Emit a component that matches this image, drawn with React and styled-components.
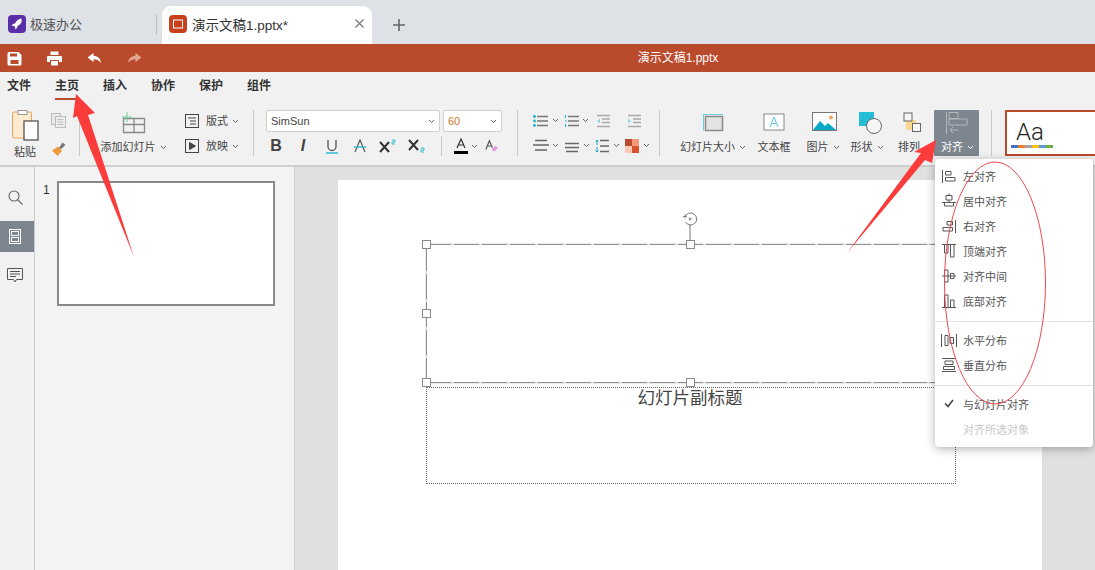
import React from "react";
import styled, { createGlobalStyle } from "styled-components";

const GlobalStyle = createGlobalStyle`
	html, body {
		margin: 0;
		padding: 0;
		background: #e0e0e0;
		overflow: hidden;
	}
	* {
		box-sizing: border-box;
	}
	body {
		font-family: "Liberation Sans", "Noto Sans CJK SC", sans-serif;
		color: #444;
	}
`;

const Page = styled.div`
	position: relative;
	width: 1095px;
	height: 570px;
	overflow: hidden;
	display: flex;
	flex-direction: column;
`;

/* browser tabs */
const TabBar = styled.div`
	height: 44px;
	flex: none;
	background: #dee1e6;
	display: flex;
	align-items: flex-end;
`;
const HomeTab = styled.div`
	width: 156px;
	height: 38px;
	padding: 0 0 3px 8px;
	display: flex;
	align-items: center;
	gap: 4px;
	font-size: 13px;
	color: #555;
`;
const TabDivider = styled.div`
	width: 1px;
	height: 20px;
	margin-bottom: 9px;
	background: #b9bcc1;
`;
const ActiveTab = styled.div`
	width: 210px;
	height: 38px;
	margin-left: 5px;
	padding: 0 8px 3px 7px;
	display: flex;
	align-items: center;
	gap: 5px;
	font-size: 13.5px;
	color: #333;
	background: #fff;
	border-radius: 9px 9px 0 0;
`;
const TabTitle = styled.span`
	flex: 1;
`;
const AddTab = styled.div`
	margin: 0 0 8px 21px;
	height: 22px;
	display: flex;
	align-items: center;
`;

const TitleBar = styled.div`
	position: relative;
	height: 28px;
	flex: none;
	background: #b94a2b;
	display: flex;
	align-items: center;
	padding-left: 7px;
`;
const QuickSlot = styled.div`
	width: 40px;
	display: flex;
	align-items: center;
`;
const DocTitle = styled.div`
	position: absolute;
	left: 0;
	right: 0;
	top: 6px;
	text-align: center;
	padding-left: 261px;
	font-size: 12px;
	line-height: 16px;
	color: #fff;
`;

const MenuBar = styled.div`
	height: 28px;
	flex: none;
	background: #f1f1f1;
	display: flex;
	padding-left: 7px;
	gap: 24px;
`;
const MenuItem = styled.div`
	height: 28px;
	line-height: 29px;
	font-size: 12px;
	font-weight: 700;
	color: #333;
	border-bottom: ${p => (p.$active ? "2px solid #b94a2b" : "0")};
`;

const Ribbon = styled.div`
	height: 67px;
	flex: none;
	background: #f1f1f1;
	border-bottom: 2px solid #cfcfcf;
	display: flex;
	align-items: flex-start;
	padding-top: 10px;
`;
const Sep = styled.div`
	flex: none;
	width: 1px;
	height: 46px;
	margin-left: ${p => p.$ml || 0}px;
	background: #c9c9c9;
`;
const PasteGroup = styled.div`
	width: 79px;
	flex: none;
	display: flex;
	padding-left: 11px;
	gap: 12px;
`;
const PasteCol = styled.div`
	width: 28px;
	display: flex;
	flex-direction: column;
	align-items: center;
	gap: 3px;
`;
const SmallCol = styled.div`
	display: flex;
	flex-direction: column;
	gap: 13px;
	padding-top: 3px;
`;
const Label = styled.span`
	font-size: 11px;
	line-height: 16px;
	color: ${p => (p.$light ? "#fff" : "#444")};
	white-space: nowrap;
	display: inline-flex;
	align-items: center;
	gap: 4px;
	margin-left: ${p => p.$indent || 0}px;
`;
const BigButton = styled.div`
	flex: none;
	width: ${p => p.$w}px;
	height: 46px;
	margin-left: ${p => p.$ml || 0}px;
	display: flex;
	flex-direction: column;
	align-items: center;
	justify-content: space-between;
	padding: 2px 0 1px;
	background: ${p => (p.$active ? "#7d868e" : "transparent")};
	border-radius: 1px;
`;
const StackGroup = styled.div`
	flex: none;
	width: ${p => p.$w}px;
	margin-left: ${p => p.$ml || 0}px;
	display: flex;
	flex-direction: column;
	gap: ${p => p.$gap ?? 3}px;
`;
const Row = styled.div`
	display: flex;
	align-items: center;
	height: ${p => p.$h || 22}px;
	gap: ${p => p.$gap || 0}px;
`;
const SelectBox = styled.div`
	width: ${p => p.$w}px;
	height: 22px;
	background: #fff;
	border: 1px solid #cfcfcf;
	border-radius: 2px;
	padding: 0 4px;
	display: flex;
	align-items: center;
	justify-content: space-between;
	font-size: 11px;
	color: ${p => p.$color || "#444"};
`;
const ToolSlot = styled.div`
	width: ${p => p.$w}px;
	flex: none;
	display: flex;
	align-items: center;
	gap: ${p => p.$gap || 0}px;
	padding-left: ${p => p.$pl || 0}px;
	justify-content: ${p => (p.$left ? "flex-start" : "center")};
`;
const BoldGlyph = styled.b`
	font-size: 16px;
	color: #444;
`;
const ItalicGlyph = styled.i`
	font-size: 16px;
	font-weight: 700;
	color: #444;
`;
const InnerSep = styled.div`
	flex: none;
	width: 1px;
	height: 20px;
	margin-left: 7px;
	background: #c9c9c9;
`;
const ThemeCard = styled.div`
	flex: none;
	width: 90px;
	height: 46px;
	margin-left: 13px;
	background: #fff;
	border: 2px solid #b94a2b;
	border-right: 0;
	padding: 7px 0 0 4px;
`;
const ThemeText = styled.div`
	font-family: Roboto, "Liberation Sans", sans-serif;
	font-weight: 300;
	font-size: 24px;
	line-height: 26px;
	margin-left: 5px;
	color: #222;
`;
const Swatches = styled.div`
	display: flex;
`;
const Swatch = styled.i`
	width: 7px;
	height: 3px;
	background: ${p => p.$c};
`;

/* main area */
const Body = styled.div`
	flex: 1;
	display: grid;
	grid-template-columns: 35px 260px 1fr;
	min-height: 0;
`;
const Rail = styled.div`
	background: #f1f1f1;
	border-right: 1px solid #c9c9c9;
	padding-top: 15px;
	display: flex;
	flex-direction: column;
	gap: 8px;
`;
const RailButton = styled.div`
	height: 31px;
	padding-right: 4px;
	display: flex;
	align-items: center;
	justify-content: center;
	background: ${p => (p.$active ? "#7d868e" : "transparent")};
`;
const Thumbs = styled.div`
	background: #f3f3f3;
	border-right: 1px solid #cfcfcf;
	padding: 14px 0 0 8px;
	display: flex;
	gap: 7px;
	align-items: flex-start;
`;
const ThumbNumber = styled.div`
	width: 7px;
	font-size: 12px;
	line-height: 18px;
	color: #333;
`;
const Thumb = styled.div`
	width: 218px;
	height: 125px;
	background: #fff;
	border: 2px solid #888;
`;
const Canvas = styled.div`
	background: #e0e0e0;
	padding: 13px 53px 0 43px;
	overflow: hidden;
`;
const Slide = styled.div`
	position: relative;
	width: 704px;
	height: 420px;
	background: #fff;
`;
const hDash = "repeating-linear-gradient(90deg, #8f8f8f 0 25px, #dcdcdc 25px 28px)";
const vDash = "repeating-linear-gradient(0deg, #8f8f8f 0 25px, #dcdcdc 25px 28px)";
const TitleBox = styled.div`
	position: absolute;
	left: 88px;
	top: 64px;
	width: 530px;
	height: 139px;
	background:
		${hDash} top / 100% 1px no-repeat,
		${hDash} bottom / 100% 1px no-repeat,
		${vDash} left / 1px 100% no-repeat,
		${vDash} right / 1px 100% no-repeat;
	outline: 1px solid #ececec;
`;
const SubtitleBox = styled.div`
	position: absolute;
	left: 88px;
	top: 207px;
	width: 530px;
	height: 97px;
	padding-right: 2px;
	border: 1px dotted #666;
	text-align: center;
	font-size: 17.5px;
	line-height: 20px;
	color: #444;
`;
const Handle = styled.div`
	position: absolute;
	left: ${p => p.$x}px;
	top: ${p => p.$y}px;
	width: 9px;
	height: 9px;
	background: #fff;
	border: 1px solid #8a8a8a;
`;
const RotateIcon = styled.svg`
	position: absolute;
	left: 344px;
	top: 32px;
`;

/* align dropdown */
const Dropdown = styled.div`
	position: absolute;
	left: 935px;
	top: 159px;
	width: 158px;
	height: 288px;
	padding-top: 4px;
	background: #fff;
	border-radius: 4px;
	box-shadow: 0 2px 10px rgba(0, 0, 0, 0.3);
`;
const DropItem = styled.div`
	height: 25px;
	display: flex;
	align-items: center;
	gap: 6px;
	padding-left: 6px;
	font-size: 11px;
	color: ${p => (p.$disabled ? "#c9c9c9" : "#555")};
`;
const DropIcon = styled.div`
	width: 16px;
	height: 18px;
	flex: none;
	display: flex;
	align-items: center;
	justify-content: center;
`;
const DropLine = styled.div`
	height: 1px;
	margin: 8px 0 5px;
	background: #e3e3e3;
`;
const Marks = styled.svg`
	position: absolute;
	left: 0;
	top: 0;
	pointer-events: none;
`;

const Caret = ({ color = "#666" }) => (
	<svg width="7" height="5" viewBox="0 0 7 5" fill="none" stroke={color} strokeWidth="1">
		<path d="M1 1l2.5 2.5L6 1" />
	</svg>
);

const Ico = ({ w = 16, h = 16, children, stroke = "#555", ...rest }) => (
	<svg width={w} height={h} viewBox={`0 0 ${w} ${h}`} fill="none" stroke={stroke} strokeWidth="1" {...rest}>
		{children}
	</svg>
);

const ListIcon = ({ num }) => (
	<Ico w={16} h={14}>
		<path d="M4 2.5h11M4 7h11M4 11.5h11" stroke="#777" strokeWidth="1.6" />
		{num ? (
			<path d="M1.5 1v3M1 7h2M1.5 10v3" stroke="#2bb5d0" strokeWidth="1.2" />
		) : (
			<g fill="#19b3d6" stroke="none">
				<circle cx="1.5" cy="2.5" r="1.4" />
				<circle cx="1.5" cy="7" r="1.4" />
				<circle cx="1.5" cy="11.5" r="1.4" />
			</g>
		)}
	</Ico>
);

const IndentIcon = ({ right }) => (
	<Ico w={15} h={14}>
		<path d="M1 1.5h13M6 5h8M6 8.5h8M1 12.5h13" stroke="#aaa" strokeWidth="1.3" />
		<path d={right ? "M1 4.5l3 2.5-3 2.5z" : "M4 4.5L1 7l3 2.5z"} fill="#8fd3e6" stroke="none" />
	</Ico>
);

const LinesIcon = ({ middle }) => (
	<Ico w={16} h={14}>
		{middle ? (
			<path d="M1 4.5h14M1 8.5h14M2 12.5h12" stroke="#666" strokeWidth="1.3" />
		) : (
			<path d="M2 1.5h12M0 6h16M2 11h12" stroke="#666" strokeWidth="1.3" />
		)}
	</Ico>
);

const alignIcons = {
	left: <path d="M1.500 3v13M4.500 4.500h5.500v3.500H4.500zM4.500 10.500h9.500V14H4.500z" />,
	center: <path d="M8 1.500v2M5 3.500h6V8H5zM8 8v2M1 10.500h14M3.500 10.500V14h9v-3.500" />,
	right: <path d="M14.500 3v13M11.500 4.500H6V8h5.500zM11.500 10.500H2V14h9.500z" />,
	top: <path d="M1 2.500h14M3.500 2.500V11H7V2.500M9.500 2.500V15H13V2.500" />,
	middle: <path d="M1 9h14M3.500 3H7v12H3.500zM9.500 6.500H13v5H9.500z" />,
	bottom: <path d="M1 15.500h14M3.500 15.500V3H7v12.500M9.500 15.500V8H13v7.500" />,
	hdist: <path d="M.5 3v13M15.500 3v13M4 4.500h3v10H4zM9 6.500h3.500v6H9z" />,
	vdist: <path d="M1 2.500h14M1 15.500h14M4 5h8v3.500H4zM2.500 10.500h11v3h-11z" />
};

const AlignIcon = ({ name }) => (
	<Ico w={16} h={18} stroke="#555">
		{alignIcons[name]}
	</Ico>
);

const dropTop = [
	["left", "左对齐"],
	["center", "居中对齐"],
	["right", "右对齐"],
	["top", "顶端对齐"],
	["middle", "对齐中间"],
	["bottom", "底部对齐"]
];
const swatchColors = ["#4472c4", "#ed7d31", "#a5a5a5", "#ffc000", "#5b9bd5", "#70ad47"];
const menus = ["文件", "主页", "插入", "协作", "保护", "组件"];
const handles = [
	[84, 60],
	[348, 60],
	[84, 129],
	[84, 198],
	[348, 198]
];

export default function App() {
	return (
		<Page>
			<GlobalStyle />
			<TabBar>
				<HomeTab>
					<Ico w={18} h={18} stroke="none">
						<rect width="18" height="18" rx="4" fill="#5b2fa8" />
						<path d="M13.500 3.500c-3 .3-5 2-6.500 5L5 9l-1.500 2 2.200-.3 1.600 1.600L7 14.500 9 13l.5-2c3-1.500 4.700-3.500 4-7.500z" fill="#fff" />
					</Ico>
					极速办公
				</HomeTab>
				<TabDivider />
				<ActiveTab>
					<Ico w={18} h={18} stroke="none">
						<rect width="18" height="18" rx="4" fill="#c8401c" />
						<rect x="4.500" y="5" width="9" height="8" fill="none" stroke="#fff" />
					</Ico>
					<TabTitle>演示文稿1.pptx*</TabTitle>
					<Ico w={9} h={9} stroke="#777" strokeWidth="1.200">
						<path d="M.5.5l8 8M8.500.5l-8 8" />
					</Ico>
				</ActiveTab>
				<AddTab>
					<Ico w={12} h={12} stroke="#666" strokeWidth="1.600">
						<path d="M6 0v12M0 6h12" />
					</Ico>
				</AddTab>
			</TabBar>

			<TitleBar>
				<QuickSlot>
					<Ico w={15} h={15} stroke="none">
						<path d="M2 1h9.500L14.500 4v9a1.500 1.500 0 0 1-1.500 1.500H2A1.500 1.500 0 0 1 .5 13V2.500A1.500 1.500 0 0 1 2 1z" fill="#fff" />
						<path d="M3 2.500h7v3H3zM3.500 9h8v4h-8z" fill="#b94a2b" />
					</Ico>
				</QuickSlot>
				<QuickSlot>
					<Ico w={15} h={15} stroke="none">
						<path d="M3.500.5h8V4h-8zM1 5h13a1 1 0 0 1 1 1v5h-3V9H3v2H0V6a1 1 0 0 1 1-1z" fill="#fff" />
						<path d="M4 10h7v4.500H4z" fill="#fff" />
					</Ico>
				</QuickSlot>
				<QuickSlot>
					<Ico w={15} h={12} stroke="none">
						<path d="M6.500 1L.5 5.500l6 4.500V7.200c3 0 5.500.8 7.500 3.800-.5-4.500-3-7-7.500-7.300z" fill="#fff" />
					</Ico>
				</QuickSlot>
				<QuickSlot>
					<Ico w={15} h={12} stroke="none">
						<path d="M8.500 1l6 4.500-6 4.500V7.200c-3 0-5.500.8-7.500 3.800.5-4.500 3-7 7.500-7.300z" fill="#e2a793" />
					</Ico>
				</QuickSlot>
				<DocTitle>演示文稿1.pptx</DocTitle>
			</TitleBar>

			<MenuBar>
				{menus.map(m => (
					<MenuItem key={m} $active={m === "主页"}>
						{m}
					</MenuItem>
				))}
			</MenuBar>

			<Ribbon>
				<PasteGroup>
					<PasteCol>
						<Ico w={27} h={31} stroke="none">
							<rect x=".5" y="2" width="19" height="26" rx="1.500" fill="#fdebd0" stroke="#e8a45c" />
							<rect x="6" y=".5" width="9" height="4" fill="#fff" stroke="#999" />
							<rect x="12" y="11" width="14" height="19" fill="#fff" stroke="#555" strokeWidth="1.300" />
						</Ico>
						<Label>粘贴</Label>
					</PasteCol>
					<SmallCol>
						<Ico w={15} h={15} stroke="#bdbdbd">
							<rect x=".5" y=".5" width="9" height="11" fill="#e8e8e8" />
							<rect x="4.500" y="3.500" width="10" height="11" fill="#eee" />
							<path d="M6.500 6.500h6M6.500 9h6M6.500 11.500h6" />
						</Ico>
						<Ico w={15} h={15} stroke="none">
							<path d="M8 7l3.500-5.500L14.500 4 9.500 8.500z" fill="#777" />
							<path d="M1 9.500L7 5.500l4 4.500-4.500 5z" fill="#ee9a3c" />
						</Ico>
					</SmallCol>
				</PasteGroup>
				<Sep />
				<BigButton $w={67} $ml={20}>
					<Ico w={24} h={22} stroke="#8a8a8a">
						<path d="M1.500 6.500h21v14h-21zM12 6.500v14M1.500 12.500h21" strokeWidth="1.300" />
						<path d="M5 0v10M0 5h10" stroke="#6fcf97" />
					</Ico>
					<Label>
						添加幻灯片
						<Caret />
					</Label>
				</BigButton>
				<StackGroup $w={68} $ml={18} $gap={3}>
					<Row $gap={7}>
						<Ico w={14} h={14} stroke="#444">
							<rect x=".5" y=".5" width="13" height="13" />
							<path d="M3 4h8M5 7h6M5 10h6" />
						</Ico>
						<Label>
							版式
							<Caret />
						</Label>
					</Row>
					<Row $gap={7}>
						<Ico w={14} h={14} stroke="#444">
							<rect x=".5" y=".5" width="13" height="13" />
							<path d="M4.500 3.500l6 3.500-6 3.500z" fill="#444" />
						</Ico>
						<Label>
							放映
							<Caret />
						</Label>
					</Row>
				</StackGroup>
				<Sep />
				<StackGroup $w={236} $ml={12} $gap={3}>
					<Row $gap={3}>
						<SelectBox $w={174}>
							SimSun
							<Caret />
						</SelectBox>
						<SelectBox $w={59} $color="#c97b2f">
							60
							<Caret />
						</SelectBox>
					</Row>
					<Row>
						<ToolSlot $w={20}>
							<BoldGlyph>B</BoldGlyph>
						</ToolSlot>
						<ToolSlot $w={34}>
							<ItalicGlyph>I</ItalicGlyph>
						</ToolSlot>
						<ToolSlot $w={24}>
							<Ico w={12} h={15} stroke="#555" strokeWidth="1.300">
								<path d="M2 1v6.500a4 4 0 0 0 8 0V1" />
								<path d="M0 14h12" stroke="#1fb4d2" strokeWidth="1.400" />
							</Ico>
						</ToolSlot>
						<ToolSlot $w={32}>
							<Ico w={12} h={14} stroke="#555" strokeWidth="1.200">
								<path d="M1 13L6 1l5 12" />
								<path d="M0 8h12" stroke="#1fb4d2" strokeWidth="1.300" />
							</Ico>
						</ToolSlot>
						<ToolSlot $w={24}>
							<Ico w={18} h={14} stroke="#333" strokeWidth="2">
								<path d="M1 3l9 10M10 3l-9 10" />
								<path d="M13 1h3v2h-3v2h3" stroke="#1fb4d2" strokeWidth=".9" />
							</Ico>
						</ToolSlot>
						<ToolSlot $w={34}>
							<Ico w={18} h={14} stroke="#333" strokeWidth="2">
								<path d="M1 1l9 10M10 1L1 11" />
								<path d="M13 9h3v2h-3v2h3" stroke="#1fb4d2" strokeWidth=".9" />
							</Ico>
						</ToolSlot>
						<InnerSep />
						<ToolSlot $w={43} $gap={3} $left $pl={12}>
							<Ico w={14} h={16} stroke="#333" strokeWidth="1.200">
								<path d="M3 10L7 1l4 9M4.500 7h5" />
								<path d="M0 14.500h14" stroke="#000" strokeWidth="3" />
							</Ico>
							<Caret />
						</ToolSlot>
						<ToolSlot $w={14} $left>
							<Ico w={16} h={14} stroke="#555" strokeWidth="1.300">
								<path d="M1 11L5 1l3.500 8M2.500 7h5" />
								<path d="M8 10l4-3 3 2-4 4H9z" fill="#dc9ad8" stroke="none" />
							</Ico>
						</ToolSlot>
					</Row>
				</StackGroup>
				<Sep $ml={15} />
				<StackGroup $w={126} $ml={15} $gap={4}>
					<Row $h={21}>
						<ToolSlot $w={31} $gap={3} $left><ListIcon /><Caret /></ToolSlot>
						<ToolSlot $w={32} $gap={2} $left><ListIcon num /><Caret /></ToolSlot>
						<ToolSlot $w={31} $left><IndentIcon /></ToolSlot>
						<ToolSlot $w={20} $left><IndentIcon right /></ToolSlot>
					</Row>
					<Row $h={21}>
						<ToolSlot $w={31} $gap={3} $left><LinesIcon /><Caret /></ToolSlot>
						<ToolSlot $w={31} $gap={3} $left><LinesIcon middle /><Caret /></ToolSlot>
						<ToolSlot $w={30} $gap={4} $left>
							<Ico w={14} h={14}>
								<path d="M5 1.500h9M5 7h9M5 12.500h9" stroke="#666" strokeWidth="1.300" />
								<path d="M2 1v5M2 8v5M.5 2.500L2 1l1.500 1.500M.5 11.500L2 13l1.500-1.500" stroke="#12a6c6" />
							</Ico>
							<Caret />
						</ToolSlot>
						<ToolSlot $w={34} $gap={4} $left>
							<Ico w={14} h={14} stroke="none">
								<rect width="7" height="7" fill="#b94a2b" />
								<rect x="7" width="7" height="7" fill="#f39a7b" />
								<rect y="7" width="7" height="7" fill="#fac8b5" />
								<rect x="7" y="7" width="7" height="7" fill="#d9552c" />
							</Ico>
							<Caret />
						</ToolSlot>
					</Row>
				</StackGroup>
				<Sep />
				<BigButton $w={66} $ml={20}>
					<Ico w={22} h={20} stroke="#8a8a8a">
						<path d="M1 2.500h20" stroke="#6ccde0" />
						<path d="M1.500 2.500v16" stroke="#6ccde0" />
						<rect x="3.500" y="4.500" width="17" height="14" fill="#e4e4e4" strokeWidth="1.500" />
					</Ico>
					<Label>
						幻灯片大小
						<Caret />
					</Label>
				</BigButton>
				<BigButton $w={34} $ml={11}>
					<Ico w={24} h={20} stroke="#888">
						<rect x="2" y="2" width="20" height="16" fill="#fff" />
						<path d="M8 15l4-10 4 10M9.500 11.500h5" stroke="#5cc7de" />
					</Ico>
					<Label>文本框</Label>
				</BigButton>
				<BigButton $w={32} $ml={16}>
					<Ico w={25} h={20} stroke="none" style={{ marginLeft: 2 }}>
						<rect x=".5" y=".5" width="24" height="18" fill="#fff" stroke="#777" />
						<path d="M1 18l7-9 5 5 3-3 8 7z" fill="#08a9c4" />
						<circle cx="19" cy="5.500" r="2" fill="#f0a65c" />
					</Ico>
					<Label>
						图片
						<Caret />
					</Label>
				</BigButton>
				<BigButton $w={32} $ml={12}>
					<Ico w={23} h={22} stroke="none" style={{ marginLeft: 6 }}>
						<rect width="15" height="14" fill="#25bcd6" />
						<circle cx="15" cy="14" r="7.500" fill="#f6f6f6" stroke="#666" />
					</Ico>
					<Label>
						形状
						<Caret />
					</Label>
				</BigButton>
				<BigButton $w={24} $ml={14}>
					<Ico w={18} h={20} stroke="#666" style={{ marginLeft: 6 }}>
						<rect x="3" y="8" width="10" height="10" fill="#fbd890" stroke="none" />
						<rect x="1" y="1" width="8" height="8" fill="#f6f6f6" />
						<rect x="9.500" y="11.500" width="8" height="8" fill="#f6f6f6" />
					</Ico>
					<Label>排列</Label>
				</BigButton>
				<BigButton $w={45} $ml={13} $active>
					<Ico w={22} h={22} stroke="#b4b9bd">
						<path d="M.5 0v22M3 .5h9v6H3zM3 7h18v6H3z" />
						<path d="M12 18H4M7 15l-3 3 3 3" />
					</Ico>
					<Label $light $indent={2}>
						对齐
						<Caret color="#fff" />
					</Label>
				</BigButton>
				<Sep $ml={12} />
				<ThemeCard>
					<ThemeText>Aa</ThemeText>
					<Swatches>
						{swatchColors.map(c => (
							<Swatch key={c} $c={c} />
						))}
					</Swatches>
				</ThemeCard>
			</Ribbon>

			<Body>
				<Rail>
					<RailButton>
						<Ico w={15} h={15} stroke="#666" strokeWidth="1.100">
							<circle cx="6" cy="6" r="5" />
							<path d="M9.500 9.500l5 5" />
						</Ico>
					</RailButton>
					<RailButton $active>
						<Ico w={12} h={15} stroke="#fff">
							<rect x=".5" y=".5" width="11" height="14" />
							<rect x="2.500" y="2.500" width="7" height="4" />
							<rect x="2.500" y="8.500" width="7" height="4" />
						</Ico>
					</RailButton>
					<RailButton>
						<Ico w={16} h={15} stroke="#555">
							<path d="M.5.500h15v11h-6L8 14l-1.500-2.500h-6z" />
							<path d="M3 3.500h10M3 6h10M3 8.500h6" />
						</Ico>
					</RailButton>
				</Rail>
				<Thumbs>
					<ThumbNumber>1</ThumbNumber>
					<Thumb />
				</Thumbs>
				<Canvas>
					<Slide>
						<TitleBox />
						<SubtitleBox>幻灯片副标题</SubtitleBox>
						<RotateIcon width="16" height="32" viewBox="0 0 16 32" fill="none" stroke="#777">
							<path d="M3 5a6 6 0 1 1 .5 5" />
							<path d="M1 4.500h4M3 2.500v4" strokeWidth=".8" />
							<circle cx="8" cy="7" r="1" />
							<path d="M8 13v19" />
						</RotateIcon>
						{handles.map(([x, y]) => (
							<Handle key={`${x}-${y}`} $x={x} $y={y} />
						))}
					</Slide>
				</Canvas>
			</Body>

			<Dropdown>
				{dropTop.map(([name, label]) => (
					<DropItem key={name}>
						<DropIcon>
							<AlignIcon name={name} />
						</DropIcon>
						{label}
					</DropItem>
				))}
				<DropLine />
				<DropItem>
					<DropIcon><AlignIcon name="hdist" /></DropIcon>
					水平分布
				</DropItem>
				<DropItem>
					<DropIcon><AlignIcon name="vdist" /></DropIcon>
					垂直分布
				</DropItem>
				<DropLine />
				<DropItem>
					<DropIcon>
						<Ico w={10} h={9} stroke="#444" strokeWidth="1.600">
							<path d="M1 4.500l3 3L9 1" />
						</Ico>
					</DropIcon>
					与幻灯片对齐
				</DropItem>
				<DropItem $disabled>
					<DropIcon />
					对齐所选对象
				</DropItem>
			</Dropdown>

			<Marks width="1095" height="570" viewBox="0 0 1095 570">
				<polygon points="76,94 95,113 88,115 134,257 77,116 73,118" fill="#fc3b3b" />
				<polygon points="936,140 932,163 925,160 847,253 921,153 914,152" fill="#fc3b3b" />
				<ellipse cx="995" cy="283" rx="50.500" ry="121" fill="none" stroke="#f2484e" strokeWidth="1" />
			</Marks>
		</Page>
	);
}
